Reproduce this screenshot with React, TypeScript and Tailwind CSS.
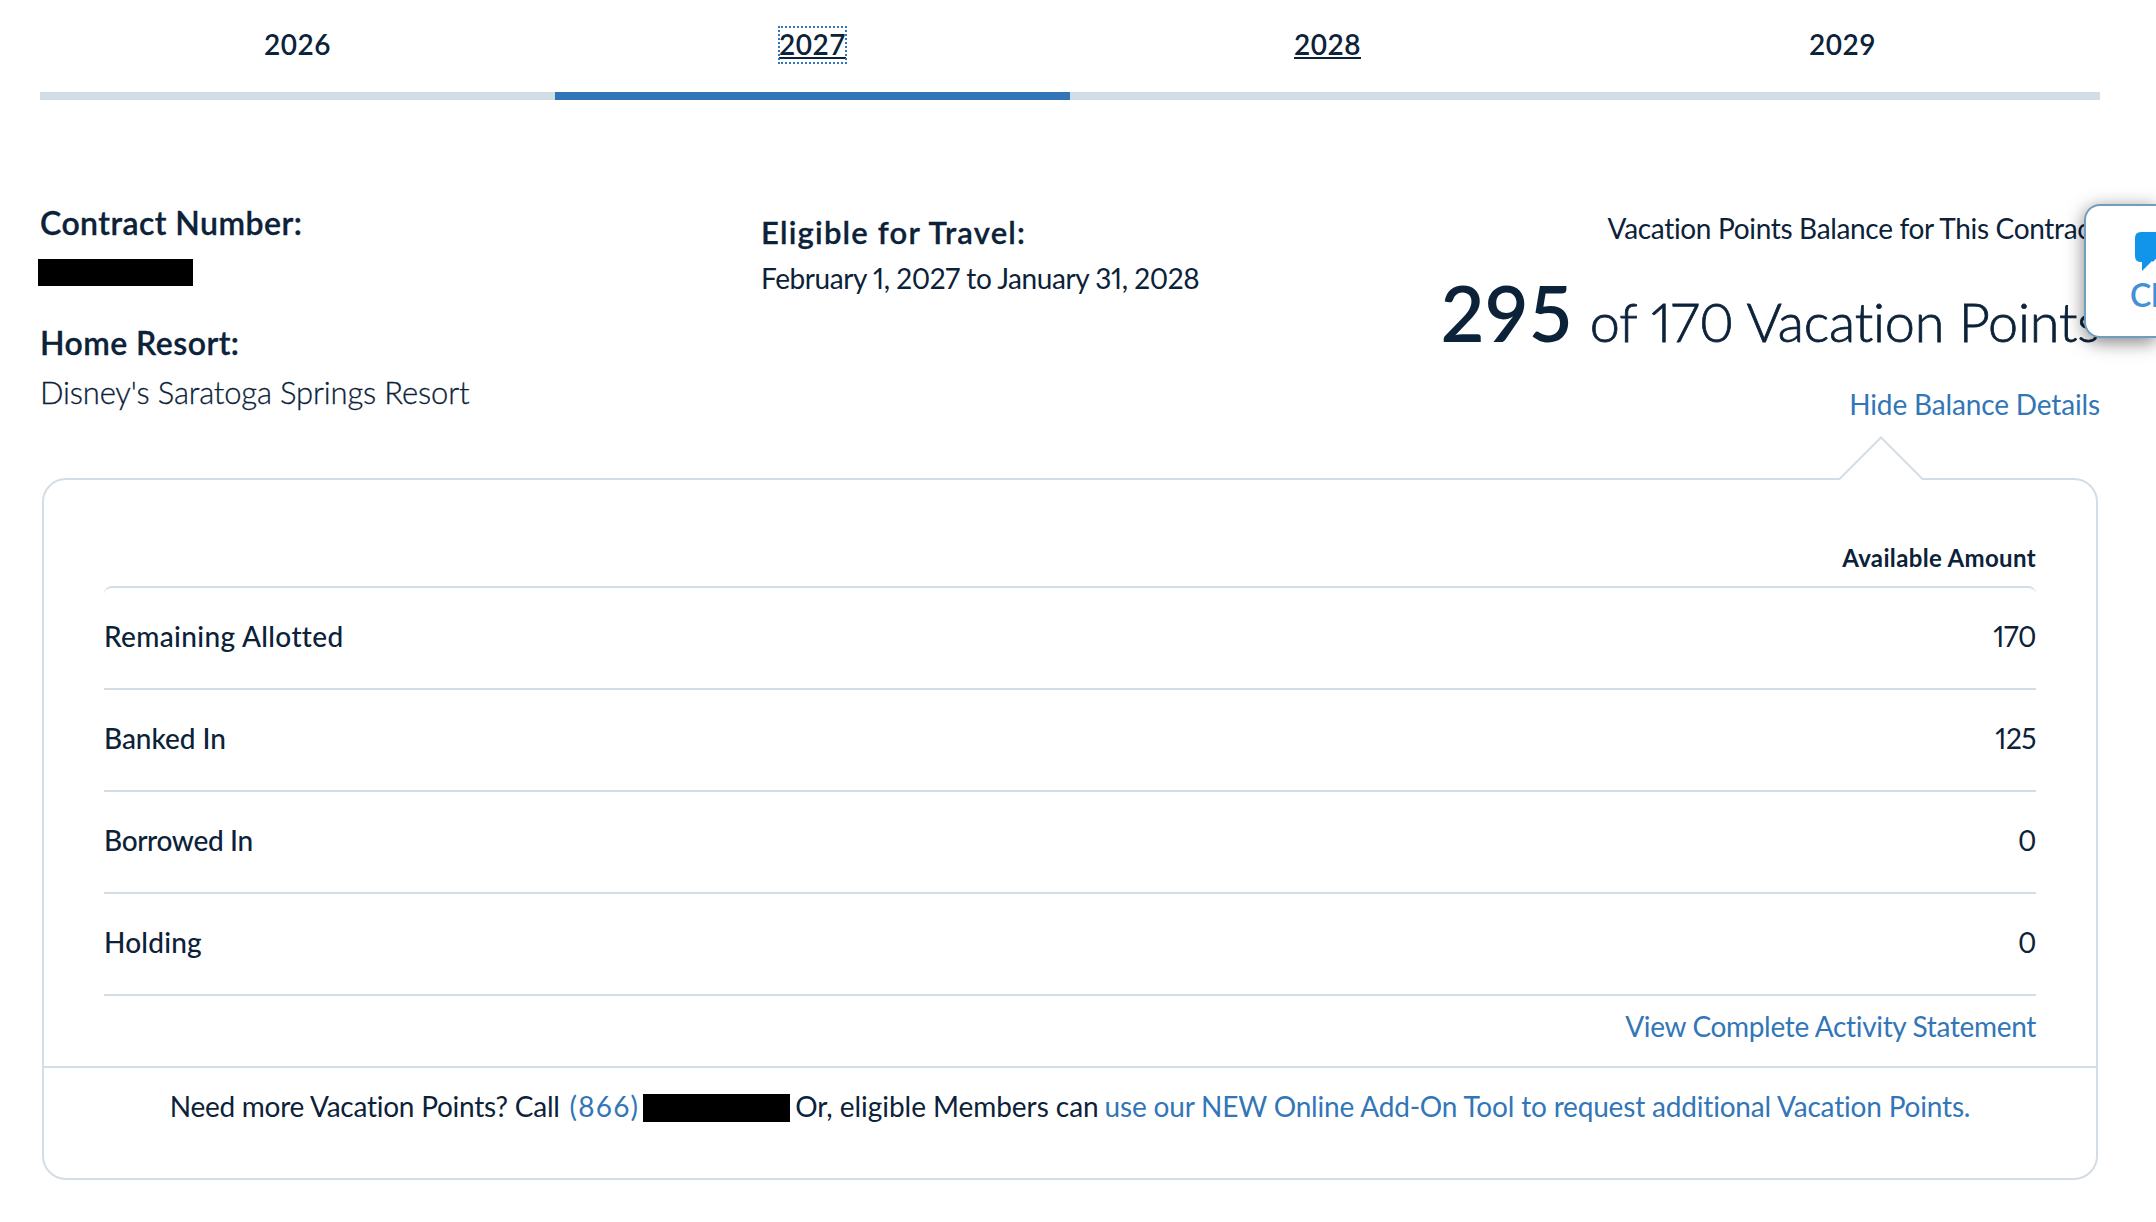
const years = [
  { year: "2026", active: false, underline: false },
  { year: "2027", active: true, underline: true },
  { year: "2028", active: false, underline: true },
  { year: "2029", active: false, underline: false },
];

const balances = [
  { label: "Remaining Allotted", amount: 170, tracking: "tracking-[0.35px]" },
  { label: "Banked In", amount: 125, tracking: "tracking-[-0.05px]" },
  { label: "Borrowed In", amount: 0, tracking: "tracking-[-0.35px]" },
  { label: "Holding", amount: 0, tracking: "tracking-[0.2px]" },
];

function YearTabs() {
  return (
    <nav className="mx-[40px] grid w-[2060px] grid-cols-4">
      {years.map(({ year, active, underline }) => (
        <div
          key={year}
          className={`flex h-[100px] items-start justify-center border-b-8 pt-[26px] ${
            active ? "border-[#3276b8]" : "border-[#d3dde6]"
          }`}
        >
          <button
            className={`px-px pt-px pb-[3px] text-[28px] leading-[34px] font-semibold tracking-[0.5px] ${
              underline ? "underline decoration-2 underline-offset-[2px]" : ""
            } ${active ? "outline-2 -outline-offset-2 outline-dotted outline-[#3276b8]" : ""}`}
          >
            {year}
          </button>
        </div>
      ))}
    </nav>
  );
}

function ContractSummary() {
  return (
    <section className="mx-[40px] flex h-[378px] w-[2060px] leading-[40px]">
      <div className="w-[721px] pt-[103px]">
        <h2 className="text-[32px] font-semibold tracking-[0.45px] [-webkit-text-stroke:0.3px]">
          Contract Number:
        </h2>
        <div className="mt-[16px] -ml-[2px] h-[27px] w-[155px] bg-black" />
        <h2 className="mt-[37px] text-[32px] font-semibold tracking-[0.45px] [-webkit-text-stroke:0.3px]">
          Home Resort:
        </h2>
        <p className="mt-[9px] text-[31px] font-light tracking-[-0.17px] [-webkit-text-stroke:0.3px]">
          Disney's Saratoga Springs Resort
        </p>
      </div>

      <div className="pt-[112px]">
        <h2 className="text-[31px] font-semibold tracking-[1.2px] [-webkit-text-stroke:0.3px]">
          Eligible for Travel:
        </h2>
        <p className="mt-[6px] text-[28px] tracking-[-0.43px] [font-feature-settings:'pnum']">
          February 1, 2027 to January 31, 2028
        </p>
      </div>

      <div className="ml-auto flex flex-col items-end pt-[108px]">
        <p className="text-[28px] tracking-[-0.33px]">Vacation Points Balance for This Contract</p>
        <div className="mt-[25px] flex h-[80px] items-baseline">
          <span className="text-[76px] leading-[80px] font-semibold">295</span>
          <span className="ml-[17px] text-[54px] leading-[80px] font-light tracking-[-0.2px] [-webkit-text-stroke:0.8px] [font-feature-settings:'pnum']">
            of 170 Vacation Points
          </span>
        </div>
        <a className="mt-[31px] text-[28px] tracking-[-0.15px] text-[#3276b8]">
          Hide Balance Details
        </a>
      </div>
    </section>
  );
}

function BalanceDetails() {
  return (
    <section className="relative mx-[42px] h-[702px] w-[2056px] rounded-[24px] border-2 border-[#d3dde6] text-[28px] leading-[40px]">
      {/* Pointer towards the toggle link */}
      <svg
        className="absolute -top-[44px] left-[1795px]"
        width="86"
        height="46"
        viewBox="0 0 86 46"
        fill="none"
      >
        <path d="M1 42H84V46H1Z" fill="white" />
        <path d="M0 43.5L42 1.5L84 43.5" stroke="#d3dde6" strokeWidth="2" />
      </svg>

      <div className="px-[60px] pt-[58px]">
        <p className="mb-[8px] text-right text-[24px] font-bold tracking-[0.35px]">
          Available Amount
        </p>
        <ul className="rounded-t-[8px] border-t-2 border-[#d3dde6]">
          {balances.map(({ label, amount, tracking }) => (
            <li
              key={label}
              className="flex h-[102px] items-center justify-between border-b-2 border-[#d3dde6] pb-[5px]"
            >
              <span className={`font-medium ${tracking}`}>{label}</span>
              <span className="tracking-[-0.5px] [font-feature-settings:'pnum']">{amount}</span>
            </li>
          ))}
        </ul>
        <p className="mt-[10px] mb-[20px] text-right">
          <a className="tracking-[-0.33px] text-[#3276b8]">View Complete Activity Statement</a>
        </p>
      </div>

      <div className="flex justify-center border-t-2 border-[#d3dde6] pt-[18px] whitespace-nowrap">
        <span className="tracking-[-0.25px]">Need more Vacation Points? Call</span>
        <a className="ml-[10px] tracking-[1.2px] text-[#3276b8]">(866)</a>
        <span className="mt-[8px] ml-[4px] h-[28px] w-[147px] bg-black" />
        <span className="ml-[5px] tracking-[-0.05px]">Or, eligible Members can</span>
        <a className="ml-[6px] tracking-[-0.18px] text-[#3276b8]">
          use our NEW Online Add-On Tool to request additional Vacation Points.
        </a>
      </div>
    </section>
  );
}

function ChatButton() {
  return (
    <button className="absolute top-[204px] right-0 flex h-[134px] w-[72px] flex-col items-start rounded-l-[16px] border-2 border-r-0 border-[#6f9dbb] bg-white pt-[26px] pl-[45px] shadow-[0_4px_18px_rgba(0,0,0,0.5)]">
      <svg className="ml-[4px] shrink-0" width="60" height="40" viewBox="0 0 60 40">
        <path
          d="M6 0H34V22C28 22 20 26 18 30L17 29L7 39V30H6Q0 30 0 24V6Q0 0 6 0Z"
          fill="#1195ea"
        />
      </svg>
      <span className="mt-[5px] -ml-px text-[32px] leading-[36px] font-semibold text-[#4291d6]">
        Chat
      </span>
    </button>
  );
}

export default function App() {
  return (
    <div className="relative h-[1222px] w-[2156px] overflow-hidden bg-white font-['Lato',sans-serif] text-[#0b2239]">
      <YearTabs />
      <ContractSummary />
      <BalanceDetails />
      <ChatButton />
    </div>
  );
}
